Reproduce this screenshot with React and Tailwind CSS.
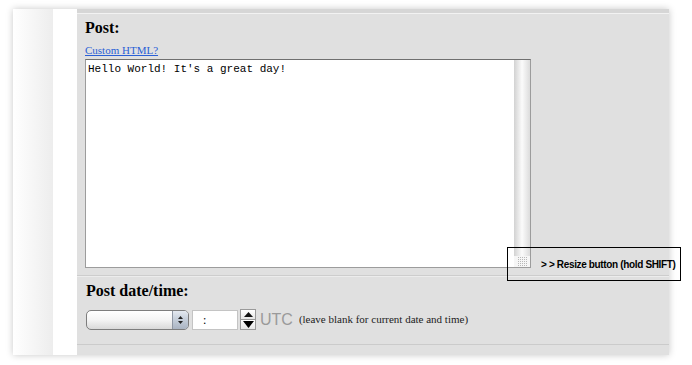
const serif = { fontFamily: '"Liberation Serif", "Times New Roman", serif' };

const SelectBox = () => (
    <div className="flex h-[20px] w-[103px] overflow-hidden rounded-[5px] border border-[#7d7d7d] bg-gradient-to-b from-white via-[#f4f4f4] to-[#d9d9d9] shadow-[inset_0_1px_0_#fff]">
        <div className="flex-1"></div>
        <div className="flex w-[16px] flex-col items-center justify-center gap-[2px] border-l border-[#8e96a3] bg-gradient-to-b from-[#e4e9f0] via-[#c3ccd8] to-[#aab4c2]">
            <svg width="5" height="3" viewBox="0 0 5 3"><path d="M2.5 0L5 3H0z" fill="#222" /></svg>
            <svg width="5" height="3" viewBox="0 0 5 3"><path d="M0 0h5L2.5 3z" fill="#222" /></svg>
        </div>
    </div>
);

const Spinner = () => (
    <div className="flex h-[21px] w-[16px] flex-col border border-[#9a9a9a] bg-[#f2f2f2]">
        <div className="flex flex-1 items-center justify-center border-b border-[#9a9a9a] bg-gradient-to-b from-white to-[#e6e6e6]">
            <svg width="9" height="5" viewBox="0 0 9 5"><path d="M4.5 0L9 5H0z" fill="#111" /></svg>
        </div>
        <div className="flex flex-1 items-center justify-center bg-gradient-to-b from-white to-[#e6e6e6]">
            <svg width="11" height="7" viewBox="0 0 11 7"><path d="M0 0h11L5.5 7z" fill="#000" /></svg>
        </div>
    </div>
);

const Grip = () => (
    <svg width="9" height="9" viewBox="0 0 9 9">
        {[0, 2, 4, 6, 8].map((y) =>
            [0, 2, 4, 6, 8].map((x) => <rect key={`${x}-${y}`} x={x} y={y} width="1" height="1" fill="#b8b8b8" />)
        )}
    </svg>
);

const App = () => {
    return (
        <div className="relative h-[365px] w-[692px] overflow-hidden bg-white">
            <div className="ml-[13px] mt-[9px] flex h-[346px] w-[656px] shadow-[0_0_7px_rgba(0,0,0,0.22)]">
                {/* left rail */}
                <div className="w-[40px] bg-gradient-to-r from-white to-[#ededed]"></div>
                <div className="w-[24px] bg-white"></div>

                {/* main panel */}
                <div className="flex flex-1 flex-col bg-[#e0e0e0]">
                    <div className="h-[4px] bg-[#d6d6d6]"></div>
                    <div className="h-[1px] bg-[#f2f2f2]"></div>

                    <div className="flex flex-col pl-[8px] pt-[4px]" style={serif}>
                        <h2 className="text-[16px] font-bold leading-[20px] text-black">Post:</h2>
                        <a href="#" className="mt-[5px] text-[11px] leading-[14px] text-[#2a5fd6] underline">Custom HTML?</a>
                        <div className="mt-[2px] flex h-[209px] w-[446px] border border-[#9c9c9c] border-t-[#6f6f6f] bg-white">
                            <div className="flex-1 pl-[2px] pt-[3px] font-['Liberation_Mono','Courier_New',monospace] text-[11px] leading-[13px] text-black">
                                Hello World! It's a great day!
                            </div>
                            <div className="flex w-[16px] flex-col justify-end bg-gradient-to-r from-[#d2d2d2] via-[#fbfbfb] to-[#dcdcdc]">
                                <div className="flex h-[11px] items-center justify-center bg-[#f6f6f6]">
                                    <Grip />
                                </div>
                            </div>
                        </div>
                    </div>

                    <div className="mt-[7px] h-[1px] bg-[#cdcdcd]"></div>
                    <div className="h-[1px] bg-[#ececec]"></div>

                    <div className="flex flex-col pl-[9px] pt-[4px]" style={serif}>
                        <h2 className="text-[16px] font-bold leading-[20px] text-black">Post date/time:</h2>
                        <div className="mt-[8px] flex items-center">
                            <SelectBox />
                            <div className="ml-[3px] flex h-[20px] w-[46px] items-center border border-[#c4c4c4] bg-white pl-[10px] text-[12px] leading-none">:</div>
                            <div className="ml-[2px]">
                                <Spinner />
                            </div>
                            <span className="ml-[4px] font-['Liberation_Sans',Arial,sans-serif] text-[16px] leading-none text-[#9a9a9a]">UTC</span>
                            <span className="ml-[6px] text-[11px] leading-none text-[#222]">(leave blank for current date and time)</span>
                        </div>
                    </div>

                    <div className="mt-auto mb-[10px] h-[1px] bg-[#cbcbcb]"></div>
                </div>
            </div>

            {/* annotation callout */}
            <div className="absolute left-[507px] top-[247px] flex h-[34px] w-[174px] items-center border border-black pl-[33px]">
                <span className="whitespace-nowrap font-['Liberation_Sans',Arial,sans-serif] text-[10px] font-bold tracking-[-0.35px] text-black">&gt; &gt; Resize button (hold SHIFT)</span>
            </div>
        </div>
    );
};

export default App;
